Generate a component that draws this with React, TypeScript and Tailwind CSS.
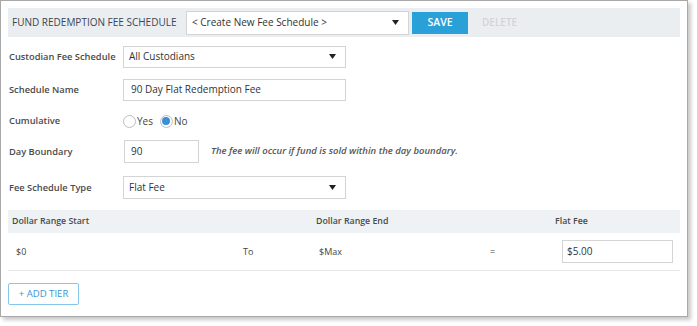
const font = { fontFamily: '"Open Sans", "Noto Sans", sans-serif' };

function Arrow() {
  return (
    <svg width="7" height="5" viewBox="0 0 7 5" className="shrink-0">
      <path d="M0 0h7L3.5 5z" fill="#222" />
    </svg>
  );
}

function Select({ value, className }: { value: string; className: string }) {
  return (
    <div
      className={`flex items-center justify-between border border-[#d4d4d4] bg-white pl-[5px] pr-[9px] text-[10px] text-[#333] ${className}`}
    >
      <span>{value}</span>
      <Arrow />
    </div>
  );
}

function Radio({ checked, label }: { checked?: boolean; label: string }) {
  return (
    <label className="flex items-center">
      <span className="flex h-[13px] w-[13px] items-center justify-center rounded-full border border-[#bdbdbd] bg-white">
        {checked && <span className="h-[8px] w-[8px] rounded-full bg-[#3b8ed8]" />}
      </span>
      <span className="ml-[1px] text-[10px] text-[#444]">{label}</span>
    </label>
  );
}

function Row({ label, className, children }: { label: string; className: string; children: React.ReactNode }) {
  return (
    <div className={`flex items-center ${className}`}>
      <div className="w-[114px] shrink-0 whitespace-nowrap text-[9.3px] font-semibold text-[#4a4a4a]">{label}</div>
      {children}
    </div>
  );
}

export default function App() {
  return (
    <div className="h-[326px] w-[697px] bg-white" style={font}>
      <div className="flex h-[317px] w-[688px] flex-col border border-[#a8a8a8] bg-white px-[7px] pt-[7px] shadow-[3px_3px_4px_rgba(0,0,0,0.22)]">
        {/* header bar */}
        <div className="flex h-[29px] items-center bg-[#ebeef1] pl-[4px]">
          <span className="w-[174px] whitespace-nowrap text-[10px] text-[#3c4650]">FUND REDEMPTION FEE SCHEDULE</span>
          <Select value="< Create New Fee Schedule >" className="h-[24px] w-[223px]" />
          <button className="ml-[3px] h-[22px] w-[56px] bg-[#2aa0d8] text-[10.5px] font-semibold text-white">SAVE</button>
          <button className="ml-[14px] text-[10px] font-semibold text-[#d2d4d6]">DELETE</button>
        </div>

        <Row label="Custodian Fee Schedule" className="mt-[8px] h-[23px] pl-[1px]">
          <Select value="All Custodians" className="h-[22px] w-[223px]" />
        </Row>

        <Row label="Schedule Name" className="mt-[10px] h-[23px] pl-[1px]">
          <div className="flex h-[22px] w-[223px] items-center border border-[#d4d4d4] pl-[7px] text-[10px] text-[#333]">
            90 Day Flat Redemption Fee
          </div>
        </Row>

        <Row label="Cumulative" className="mt-[9px] h-[22px] pl-[1px]">
          <div className="flex items-center gap-[7px]">
            <Radio label="Yes" />
            <Radio label="No" checked />
          </div>
        </Row>

        <Row label="Day Boundary" className="mt-[8px] h-[23px] pl-[1px]">
          <div className="ml-[1px] flex h-[23px] w-[75px] items-center border border-[#d4d4d4] pl-[6px] text-[10px] text-[#333]">
            90
          </div>
          <span className="ml-[12px] whitespace-nowrap text-[9.5px] font-semibold italic text-[#555]">
            The fee will occur if fund is sold within the day boundary.
          </span>
        </Row>

        <Row label="Fee Schedule Type" className="mt-[13px] h-[23px] pl-[1px]">
          <Select value="Flat Fee" className="h-[23px] w-[223px]" />
        </Row>

        {/* tiers table */}
        <div className="mt-[11px] flex h-[23px] items-center bg-[#eef2f5] text-[8.8px] font-semibold text-[#4a4a4a]">
          <span className="w-[308px] pl-[4px]">Dollar Range Start</span>
          <span className="w-[239px]">Dollar Range End</span>
          <span>Flat Fee</span>
        </div>
        <div className="flex h-[38px] items-center border-b border-[#e6e8ea] text-[9px] text-[#444]">
          <span className="w-[235px] pl-[8px]">$0</span>
          <span className="w-[76px]">To</span>
          <span className="w-[171px]">$Max</span>
          <span className="w-[72px]">=</span>
          <div className="flex h-[23px] w-[111px] items-center border border-[#d4d4d4] pl-[4px] text-[10px] text-[#333]">
            $5.00
          </div>
        </div>

        <div className="mt-[12px]">
          <button className="flex h-[22px] w-[71px] items-center justify-center rounded-[2px] border border-[#86c6ea] text-[9.6px] text-[#3a96d2]">
            + ADD TIER
          </button>
        </div>
      </div>
    </div>
  );
}
